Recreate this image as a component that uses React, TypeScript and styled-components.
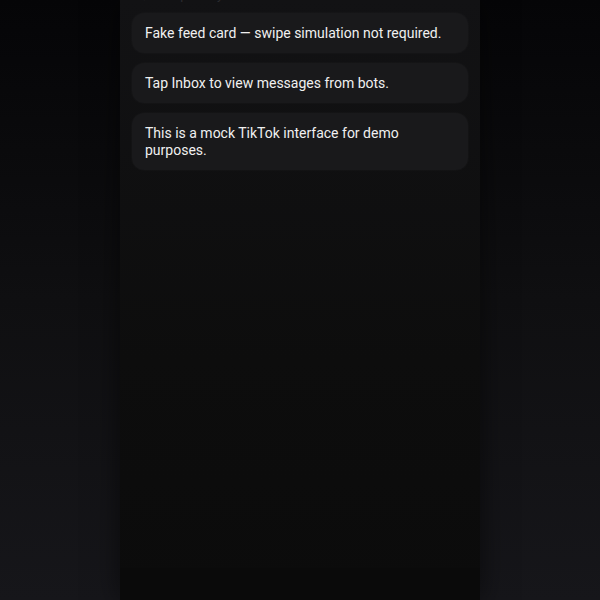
import React from "react";
import { createGlobalStyle, styled } from "styled-components";

const GlobalStyle = createGlobalStyle`
  html, body {
    margin: 0;
    padding: 0;
    height: 100%;
  }
  body {
    background: linear-gradient(180deg, #050507 0%, #0f0f11 50%, #16161a 100%);
    font-family: Roboto, "Liberation Sans", sans-serif;
    color: #ececec;
    overflow: hidden;
  }
  #root {
    height: 100%;
  }
`;

const Stage = styled.div`
  display: flex;
  justify-content: center;
  height: 100vh;
`;

const Phone = styled.div`
  width: 360px;
  height: 100%;
  display: flex;
  flex-direction: column;
  background: linear-gradient(180deg, #121214 0%, #0d0d0d 60%, #0b0b0b 100%);
  box-shadow: 0 0 28px rgba(0, 0, 0, 0.55);
  overflow: hidden;
`;

const Feed = styled.div`
  flex: 1;
  display: flex;
  flex-direction: column;
  gap: 10px;
  padding: 0 12px;
`;

const SectionTitle = styled.div`
  margin-top: -13px;
  padding-left: 5px;
  font-size: 13px;
  line-height: 16px;
  color: #2c2c30;
`;

const Card = styled.div`
  background: #19191b;
  border-radius: 12px;
  padding: 11.5px 13px;
  font-size: 14px;
  line-height: 17px;
  color: #f0f0f0;
  box-shadow: 0 0 0 1px rgba(255, 255, 255, 0.015);
`;

const BottomBar = styled.div`
  height: 32px;
  background: #0a0a0a;
`;

const notes = [
  "Fake feed card — swipe simulation not required.",
  "Tap Inbox to view messages from bots.",
  "This is a mock TikTok interface for demo purposes.",
];

export default function App() {
  return (
    <>
      <GlobalStyle />
      <Stage>
        <Phone>
          <Feed>
            <SectionTitle>Quick tips for you</SectionTitle>
            {notes.map((n) => (
              <Card key={n}>{n}</Card>
            ))}
          </Feed>
          <BottomBar />
        </Phone>
      </Stage>
    </>
  );
}
